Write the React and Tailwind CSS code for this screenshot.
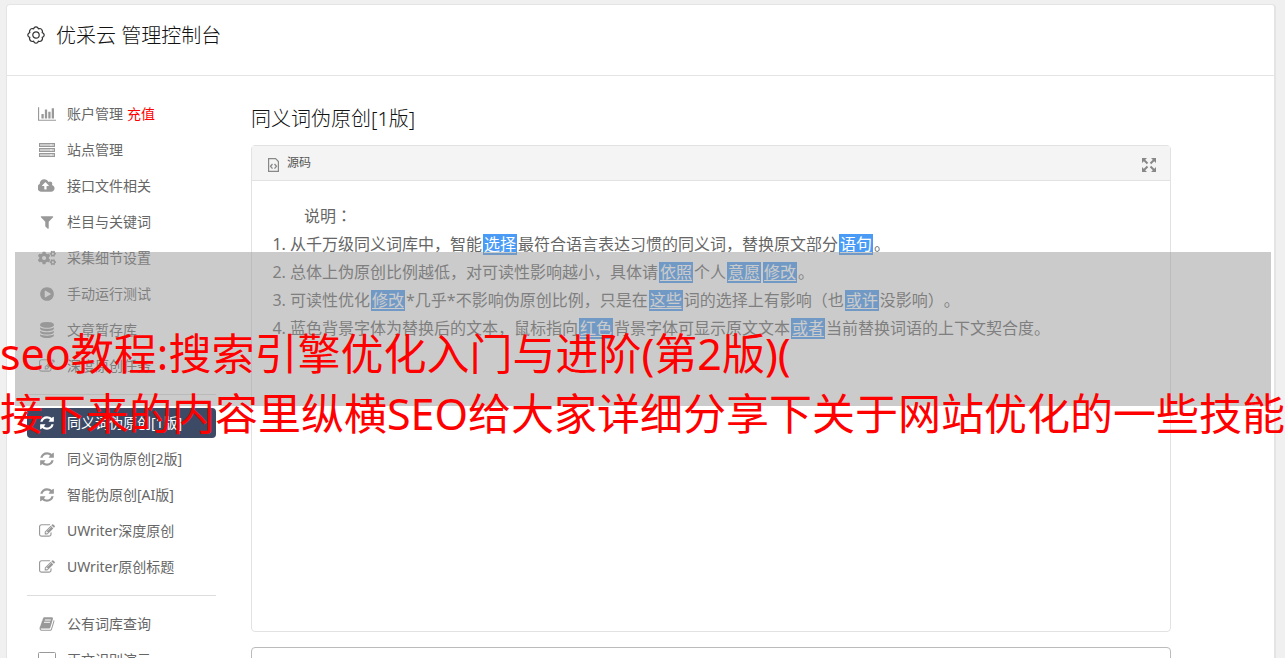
import React from "react";
import { FaCogs } from "react-icons/fa";

const PATHS = {
  chart: ["0 0 2048 1792", "M640 896v512h-256v-512h256zm384-512v1024h-256v-1024h256zm1024 1152v128h-2048v-1536h128v1408h1920zm-640-896v768h-256v-768h256zm384-384v1152h-256v-1152h256z"],
  cloud: ["0 0 1920 1792", "M1216 864q0-14-9-23l-352-352q-9-9-23-9t-23 9l-351 351q-10 12-10 24 0 14 9 23t23 9h224v352q0 13 9.5 22.5t22.5 9.5h192q13 0 22.5-9.5t9.5-22.5v-352h224q13 0 22.5-9.5t9.5-22.5zm640 288q0 159-112.5 271.5t-271.5 112.5h-1088q-185 0-316.5-131.5t-131.5-316.5q0-130 70-240t188-165q-2-30-2-43 0-212 150-362t362-150q156 0 285.5 87t188.5 231q71-62 166-62 106 0 181 75t75 181q0 76-41 138 130 31 213.5 135.5t83.5 238.5z"],
  filter: ["0 0 1792 1792", "M1595 295q17 41-14 70l-493 493v742q0 42-39 59-13 5-25 5-27 0-45-19l-256-256q-19-19-19-45v-486l-493-493q-31-29-14-70 17-39 59-39h1280q42 0 59 39z"],
  play: ["0 0 1792 1792", "M896 128q209 0 385.5 103t279.5 279.5 103 385.5-103 385.5-279.5 279.5-385.5 103-385.5-103-279.5-279.5-103-385.5 103-385.5 279.5-279.5 385.5-103zm384 823q32-18 32-55t-32-55l-544-320q-31-19-64-1-32 19-32 56v640q0 37 32 56 16 8 32 8 17 0 32-9z"],
  database: ["0 0 1792 1792", "M896 768q237 0 443-43t325-127v170q0 69-103 128t-280 93.5-385 34.5-385-34.5-280-93.5-103-128v-170q119 84 325 127t443 43zm0 768q237 0 443-43t325-127v170q0 69-103 128t-280 93.5-385 34.5-385-34.5-280-93.5-103-128v-170q119 84 325 127t443 43zm0-384q237 0 443-43t325-127v170q0 69-103 128t-280 93.5-385 34.5-385-34.5-280-93.5-103-128v-170q119 84 325 127t443 43zm0-1152q208 0 385 34.5t280 93.5 103 128v128q0 69-103 128t-280 93.5-385 34.5-385-34.5-280-93.5-103-128v-128q0-69 103-128t280-93.5 385-34.5z"],
  edit: ["0 0 1792 1792", "M888 1184l116-116-152-152-116 116v56h96v96h56zm440-720q-16-16-33 1l-350 350q-17 17-1 33t33-1l350-350q17-17 1-33zm80 594v190q0 119-84.5 203.5t-203.5 84.5h-832q-119 0-203.5-84.5t-84.5-203.5v-832q0-119 84.5-203.5t203.5-84.5h832q63 0 117 25 15 7 18 23 3 17-9 29l-49 49q-14 14-32 8-23-6-45-6h-832q-66 0-113 47t-47 113v832q0 66 47 113t113 47h832q66 0 113-47t47-113v-126q0-13 9-22l64-64q15-15 35-7t20 29zm-96-738l288 288-672 672h-288v-288zm444 132l-92 92-288-288 92-92q28-28 68-28t68 28l152 152q28 28 28 68t-28 68z"],
  refresh: ["0 0 1792 1792", "M1639 1056q0 5-1 7-64 268-268 434.5t-478 166.5q-146 0-282.5-55t-243.5-157l-129 129q-19 19-45 19t-45-19-19-45v-448q0-26 19-45t45-19h448q26 0 45 19t19 45-19 45l-137 137q71 66 161 102t187 36q134 0 250-65t186-179q11-17 53-117 8-23 30-23h192q13 0 22.5 9.5t9.5 22.5zm25-800v448q0 26-19 45t-45 19h-448q-26 0-45-19t-19-45 19-45l138-138q-148-137-349-137-134 0-250 65t-186 179q-11 17-53 117-8 23-30 23h-199q-13 0-22.5-9.5t-9.5-22.5v-7q65-268 270-434.5t480-166.5q146 0 284 55.5t245 156.5l130-129q19-19 45-19t45 19 19 45z"],
  book: ["0 0 1792 1792", "M1703 478q40 57 18 129l-275 906q-19 64-76.5 107.5t-122.5 43.5h-923q-77 0-148.5-53.5t-99.5-131.5q-24-67-2-127 0-4 3-27t4-37q1-8-3-21.5t-3-19.5q2-11 8-21t16.5-23.5 16.5-23.5q23-38 45-91.5t30-91.5q3-10 .5-30t-.5-28q3-11 17-28t17-23q21-36 42-92t25-90q1-9-2.5-32t.5-28q4-13 22-30.5t22-22.5q19-26 42.5-84.5t27.5-96.5q1-8-3-25.5t-2-26.5q2-8 9-18t18-23 17-21q8-12 16.5-30.5t15-35 16-36 19.5-32 26.5-23.5 36-11.5 47.5 5.5l-1 3q38-9 51-9h761q74 0 114 56t18 130l-274 906q-36 119-71.5 153.5t-128.5 34.5h-869q-27 0-38 15-11 16-1 43 24 70 144 70h923q29 0 56-15.5t35-41.5l300-987q7-22 5-57 38 15 59 43zm-1064 2q-4 13 2 22.5t20 9.5h608q13 0 25.5-9.5t16.5-22.5l21-64q4-13-2-22.5t-20-9.5h-608q-13 0-25.5 9.5t-16.5 22.5zm-83 256q-4 13 2 22.5t20 9.5h608q13 0 25.5-9.5t16.5-22.5l21-64q4-13-2-22.5t-20-9.5h-608q-13 0-25.5 9.5t-16.5 22.5z"],
};

function Icon({ name }) {
  if (name === "cogs") return <FaCogs className="h-4 w-[18px]" />;
  if (name === "server")
    return (
      <svg viewBox="0 0 16 14" className="h-3.5 w-4" fill="none" stroke="currentColor">
        {[0, 5, 10].map((y) => (
          <g key={y}>
            <rect x="0.5" y={y + 0.5} width="15" height="3" fill="currentColor" fillOpacity="0.5" />
            <path d={`M11 ${y + 2}h2`} stroke="#fff" strokeOpacity="0.7" />
          </g>
        ))}
      </svg>
    );
  if (name === "desktop")
    return (
      <svg viewBox="0 0 18 16" className="h-4 w-[18px]" fill="none" stroke="currentColor">
        <rect x="0.5" y="0.5" width="17" height="12" rx="1" />
        <path d="M6 15.500h6M9 13v2" />
      </svg>
    );
  const [viewBox, d] = PATHS[name];
  return (
    <svg viewBox={viewBox} className="h-4 w-auto" fill="currentColor">
      <path d={d} />
    </svg>
  );
}

function GearIcon() {
  return (
    <svg viewBox="0 0 18 18" className="size-[18px]" fill="none" stroke="#333" strokeWidth="1.200">
      <path
        strokeLinejoin="round"
        d="M7.300 1.500Q9 .2 10.700 1.500L11.300 2.800 12.700 2.500Q15 2.600 15.500 5.300L15.200 6.700 16.500 7.300Q17.800 9 16.500 10.700L15.200 11.300 15.500 12.700Q15 15.400 12.700 15.500L11.300 15.200 10.700 16.500Q9 17.800 7.300 16.500L6.700 15.200 5.300 15.500Q3 15.400 2.500 12.700L2.800 11.300 1.500 10.700Q.2 9 1.500 7.300L2.800 6.700 2.500 5.300Q3 2.600 5.300 2.500L6.700 2.800z"
      />
      <circle cx="9" cy="9" r="3.200" />
    </svg>
  );
}

const GROUPS = [
  [
    ["chart", "账户管理", "充值"],
    ["server", "站点管理"],
    ["cloud", "接口文件相关"],
    ["filter", "栏目与关键词"],
    ["cogs", "采集细节设置"],
    ["play", "手动运行测试"],
    ["database", "文章暂存库"],
    ["edit", "深度原创任务"],
  ],
  [
    ["refresh", "同义词伪原创[1版]"],
    ["refresh", "同义词伪原创[2版]"],
    ["refresh", "智能伪原创[AI版]"],
    ["edit", "UWriter深度原创"],
    ["edit", "UWriter原创标题"],
  ],
  [
    ["book", "公有词库查询"],
    ["desktop", "正文识别演示"],
  ],
];

const ACTIVE = "同义词伪原创[1版]";

function Sidebar() {
  return (
    <nav className="w-[189px] shrink-0 text-sm">
      {GROUPS.map((items, i) => (
        <ul
          key={i}
          className={
            i === 0
              ? "flex flex-col gap-1.5"
              : "mt-[13px] flex flex-col gap-1.5 border-t border-[#ddd] pt-[13px]"
          }
        >
          {items.map(([icon, label, extra]) => {
            const active = label === ACTIVE;
            return (
              <li key={label}>
                <a
                  href="#"
                  className={
                    active
                      ? "flex h-[30px] items-center rounded bg-[#3c4a66] pl-2.5 text-white"
                      : "flex h-[30px] items-center rounded pl-2.5 text-[#666]"
                  }
                >
                  <span
                    className={
                      active
                        ? "mr-2.5 flex w-5 justify-center text-white"
                        : "mr-2.5 flex w-5 justify-center text-[#999]"
                    }
                  >
                    <Icon name={icon} />
                  </span>
                  {label}
                  {extra && <span className="ml-1 text-[#f00]">{extra}</span>}
                </a>
              </li>
            );
          })}
        </ul>
      ))}
    </nav>
  );
}

function Mark({ children }) {
  return (
    <a href="#" className="mx-px inline-block bg-[#4a9bf5] px-px leading-[21px] text-white underline underline-offset-2">
      {children}
    </a>
  );
}

function SourcePanel() {
  return (
    <section className="mt-3 h-[487px] rounded border border-[#e2e2e2]">
      <header className="flex h-[35px] items-center border-b border-[#e2e2e2] bg-[#f4f4f4] pr-3.5 pl-4 text-xs text-[#555]">
        <svg viewBox="0 0 11 14" className="mt-1 mr-2 h-3.5 w-[11px]" fill="none" stroke="#888">
          <path strokeWidth="1.200" d="M.6.600h7l2.800 3v9.800H.6z" />
          <path strokeWidth="1.300" d="M4.500 6L2.500 8.300l2 2.300M6.500 6l2 2.300-2 2.300" />
        </svg>
        源码
        <button type="button" aria-label="全屏" className="mt-1 ml-auto">
          <svg viewBox="0 0 14 14" className="size-3.5" fill="#888" stroke="#888" strokeWidth="2">
            <path stroke="none" d="M0 0h5L0 5zM14 0v5L9 0zM0 14V9l5 5zM14 14H9l5-5z" />
            <path d="M1.500 1.500l4 4M12.500 1.500l-4 4M1.500 12.500l4-4M12.500 12.500l-4-4" />
          </svg>
        </button>
      </header>
      <div className="px-5 pt-5 text-base leading-7 text-[#666] [text-spacing-trim:space-all]">
        <p className="indent-8">
          说明<span className="font-['Noto_Sans_CJK_TC',sans-serif]">：</span>
        </p>
        <ol className="list-decimal pl-[18px]">
          <li>
            从千万级同义词库中，智能<Mark>选择</Mark>最符合语言表达习惯的同义词，替换原文部分<Mark>语句</Mark>。
          </li>
          <li>
            总体上伪原创比例越低，对可读性影响越小，具体请<Mark>依照</Mark>个人<Mark>意愿</Mark>
            <Mark>修改</Mark>。
          </li>
          <li>
            可读性优化<Mark>修改</Mark>*几乎*不影响伪原创比例，只是在<Mark>这些</Mark>词的选择上有影响（也<Mark>或许</Mark>没影响）。
          </li>
          <li>
            蓝色背景字体为替换后的文本，鼠标指向<Mark>红色</Mark>背景字体可显示原文文本<Mark>或者</Mark>当前替换词语的上下文契合度。
          </li>
        </ol>
      </div>
    </section>
  );
}

export default function App() {
  return (
    <div className="relative h-screen overflow-hidden bg-[#f0f0f0] pt-1 pr-[9px] pl-1.5 font-['Noto_Sans','Noto_Sans_CJK_SC',sans-serif]">
      <div className="min-h-full rounded-t border border-r-2 border-[#e4e4e4] bg-white">
        <header className="flex h-[71px] items-center gap-[11px] border-b border-[#e4e4e4] pb-2 pl-5">
          <span className="pb-[3px]">
            <GearIcon />
          </span>
          <h1 className="text-xl font-light text-[#111]">优采云 管理控制台</h1>
        </header>
        <div className="flex gap-[35px] pt-[23px] pr-[103px] pl-5">
          <Sidebar />
          <main className="min-w-0 flex-1 pt-1.5">
            <h2 className="text-xl font-light text-[#111]">同义词伪原创[1版]</h2>
            <SourcePanel />
            <textarea
              aria-label="原文"
              className="mt-[15px] block h-40 w-full resize-none rounded border border-[#bbb] bg-white"
            />
          </main>
        </div>
      </div>
      <div className="pointer-events-none absolute top-[252px] right-3.5 left-[15px] h-[154px] bg-[#979797]/50" />
      <p className="pointer-events-none absolute top-[324px] left-0 text-[43px] leading-[60px] whitespace-nowrap text-[#f00]">
        seo教程:搜索引擎优化入门与进阶(第2版)(
        <br />
        接下来的内容里纵横SEO给大家详细分享下关于网站优化的一些技能
      </p>
    </div>
  );
}
